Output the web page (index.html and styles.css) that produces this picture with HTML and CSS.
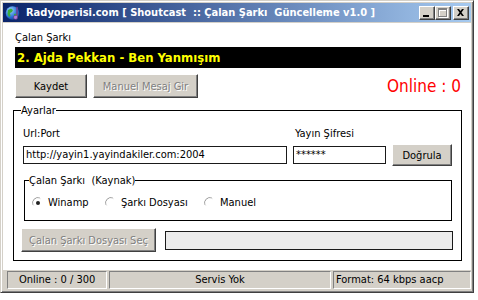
FILE: index.html
```html
<!DOCTYPE html>
<html lang="tr">
<head>
<meta charset="utf-8">
<title>Radyoperisi.com</title>
<link rel="stylesheet" href="styles.css">
</head>
<body>
<div class="window">
  <div class="titlebar">
    <svg class="app-icon" viewBox="0 0 16 16" width="16" height="16">
      <defs>
        <radialGradient id="g" cx="0.35" cy="0.3" r="0.8">
          <stop offset="0" stop-color="#9fd4ff"/>
          <stop offset="0.6" stop-color="#2c74d8"/>
          <stop offset="1" stop-color="#0d3a8c"/>
        </radialGradient>
      </defs>
      <circle cx="7.5" cy="8" r="6.8" fill="url(#g)"/>
      <path d="M3 5 L6 3.5 L8 5 L7 7 L5 8 L5.5 11 L4 12 L2.5 9 Z" fill="#3cae3c"/>
      <path d="M9 9 L12 8.5 L13 11 L10.5 13.5 L9 12 Z" fill="#3cae3c"/>
      <path d="M11.5 2 L12.5 2 L12.5 12 A2 2 0 1 1 11.5 10.6 Z" fill="#b07cd8" stroke="#5a2d82" stroke-width="0.6"/>
    </svg>
    <span class="title">Radyoperisi.com [ Shoutcast&nbsp; :: Çalan Şarkı&nbsp; Güncelleme v1.0 ]</span>
    <div class="caption-btns">
      <span class="cbtn"><svg viewBox="0 0 16 14" width="16" height="14"><rect x="4" y="9" width="6" height="2" fill="#000"/></svg></span>
      <span class="cbtn"><svg viewBox="0 0 16 14" width="16" height="14"><path d="M4 3h9v9h-9z M5 5v6h7v-6z" fill="#fff" fill-rule="evenodd"/><path d="M3 2h9v9h-9z M4 4v6h7v-6z" fill="#808080" fill-rule="evenodd"/></svg></span>
      <span class="cbtn close"><svg viewBox="0 0 16 14" width="16" height="14"><path d="M4 3h2l1.5 2 1.5-2h2l-2.5 3.5 2.5 3.5h-2l-1.5-2-1.5 2h-2l2.5-3.5z" fill="#000"/></svg></span>
    </div>
  </div>

  <div class="client">
    <div class="now-label">Çalan Şarkı</div>
    <div class="now-playing">2. Ajda Pekkan - Ben Yanmışım</div>
    <div class="actions">
      <button class="btn btn-save">Kaydet</button>
      <button class="btn btn-manual" disabled>Manuel Mesaj Gir</button>
      <span class="online">Online : 0</span>
    </div>

    <div class="group settings">
      <span class="group-title">Ayarlar</span>
      <div class="conn-grid">
        <span class="field-label">Url:Port</span>
        <span class="field-label pass-label">Yayın Şifresi</span>
        <span></span>
        <div class="textbox">http://yayin1.yayindakiler.com:2004</div>
        <div class="textbox">******</div>
        <button class="btn btn-verify">Doğrula</button>
      </div>

      <div class="group source">
        <span class="group-title">Çalan Şarkı&nbsp; (Kaynak)</span>
        <div class="radios">
          <span class="radio r-winamp">
            <svg viewBox="0 0 12 12" width="12" height="12"><path d="M1.1 8 A5.2 5.2 0 0 1 8 1.1" fill="none" stroke="#9a9a9a"/><path d="M8 1.1 A5.2 5.2 0 0 1 1.1 8" fill="none" stroke="#e4e4e4"/><circle cx="6" cy="6" r="4.6" fill="#fff"/><circle cx="6" cy="6" r="2" fill="#222"/></svg>
            Winamp</span>
          <span class="radio r-file">
            <svg viewBox="0 0 12 12" width="12" height="12"><path d="M1.1 8 A5.2 5.2 0 0 1 8 1.1" fill="none" stroke="#9a9a9a"/><path d="M8 1.1 A5.2 5.2 0 0 1 1.1 8" fill="none" stroke="#e4e4e4"/><circle cx="6" cy="6" r="4.6" fill="#fff"/></svg>
            Şarkı Dosyası</span>
          <span class="radio r-manual">
            <svg viewBox="0 0 12 12" width="12" height="12"><path d="M1.1 8 A5.2 5.2 0 0 1 8 1.1" fill="none" stroke="#9a9a9a"/><path d="M8 1.1 A5.2 5.2 0 0 1 1.1 8" fill="none" stroke="#e4e4e4"/><circle cx="6" cy="6" r="4.6" fill="#fff"/></svg>
            Manuel</span>
        </div>
      </div>

      <div class="file-row">
        <button class="btn btn-file" disabled>Çalan Şarkı Dosyası Seç</button>
        <div class="filebox"></div>
      </div>
    </div>
  </div>

  <div class="statusbar">
    <div class="panel p-online">Online : 0 / 300</div>
    <div class="panel p-service">Servis Yok</div>
    <div class="panel p-format">Format: 64 kbps aacp</div>
  </div>
</div>
</body>
</html>
```

FILE: styles.css
```css
html, body {
  margin: 0;
  padding: 0;
  background: #fff;
}

body {
  font-family: "DejaVu Sans Condensed", "DejaVu Sans", sans-serif;
  font-size: 11px;
  line-height: 13px;
  color: #000;
}

.window {
  width: 474px;
  height: 293px;
  box-sizing: border-box;
  border: 1px solid;
  border-color: #d4d0c8 #404040 #404040 #d4d0c8;
  box-shadow: inset 1px 1px #fff, inset -1px -1px #808080;
  padding: 2px;
  background: #d4d0c8;
  display: flex;
  flex-direction: column;
}

.titlebar {
  height: 19px;
  flex: none;
  display: flex;
  align-items: center;
  padding: 0 2px;
  background: linear-gradient(to right, #0a246a, #a6caf0);
  color: #fff;
  font-weight: bold;
  white-space: nowrap;
}

.app-icon {
  flex: none;
  margin-right: 5px;
}

.caption-btns {
  margin-left: auto;
  display: flex;
}

.cbtn {
  width: 16px;
  height: 14px;
  box-sizing: border-box;
  background: #d4d0c8;
  border: 1px solid;
  border-color: #fff #404040 #404040 #fff;
  box-shadow: inset -1px -1px #808080;
  position: relative;
}

.cbtn svg {
  position: absolute;
  left: -1px;
  top: -1px;
}

.cbtn.close {
  margin-left: 2px;
}

.client {
  flex: 1;
  margin-top: 1px;
  background: #fff;
  padding: 8px 9px 0 10px;
  display: flex;
  flex-direction: column;
}

.now-label {
  margin-left: 2px;
}

.now-playing {
  margin: 3px 1px 0 2px;
  height: 21px;
  background: #000;
  color: #ffff00;
  font-weight: bold;
  font-size: 13px;
  line-height: 21px;
  padding-left: 2px;
}

.actions {
  margin: 6px 1px 0 2px;
  display: flex;
  align-items: center;
  gap: 6px;
}

.btn {
  font: inherit;
  color: #000;
  background: #d4d0c8;
  border: 1px solid;
  border-color: #fff #404040 #404040 #fff;
  box-shadow: inset -1px -1px #808080;
  padding: 0;
  margin: 0;
  box-sizing: border-box;
}

.btn:disabled {
  color: #808080;
  text-shadow: 1px 1px #fff;
}

.btn-save {
  width: 72px;
  height: 24px;
}

.btn-manual {
  width: 105px;
  height: 24px;
}

.online {
  margin-left: auto;
  color: #ff0000;
  font-size: 17px;
  line-height: 20px;
}

.group {
  position: relative;
  border: 1px solid #000;
}

.group-title {
  position: absolute;
  top: -7px;
  line-height: 13px;
  background: #fff;
  white-space: nowrap;
}

.settings {
  margin-top: 12px;
  padding: 16px 8px 8px 9px;
}

.settings > .group-title {
  left: 7px;
}

.conn-grid {
  display: grid;
  grid-template-columns: 264px 93px 60px;
  grid-template-rows: 13px 22px;
  column-gap: 6px;
  row-gap: 4px;
  align-items: center;
}

.pass-label {
  padding-left: 2px;
}

.textbox {
  height: 18px;
  box-sizing: border-box;
  border: 1px solid #1a1a1a;
  padding: 0 2px;
  line-height: 16px;
  white-space: nowrap;
  overflow: hidden;
}

.btn-verify {
  height: 22px;
  width: 60px;
}

.source {
  margin: 14px 1px 0 1px;
  padding: 15px 5px 11px 7px;
}

.source > .group-title {
  left: 4px;
}

.radios {
  display: flex;
  height: 13px;
}

.radio {
  display: flex;
  align-items: center;
  gap: 4px;
}

.r-winamp {
  width: 73px;
}

.r-file {
  width: 99px;
}

.file-row {
  margin: 7px 0 0 -2px;
  display: flex;
  align-items: center;
  gap: 9px;
}

.btn-file {
  width: 135px;
  height: 24px;
}

.filebox {
  flex: 1;
  height: 19px;
  box-sizing: border-box;
  border: 1px solid #1a1a1a;
  background: #ebebeb;
}

.statusbar {
  height: 20px;
  flex: none;
  display: flex;
  gap: 2px;
  padding: 1px 0 1px 4px;
  box-sizing: border-box;
  background: #d4d0c8;
}

.panel {
  height: 18px;
  box-sizing: border-box;
  border: 1px solid;
  border-color: #808080 #fff #fff #808080;
  line-height: 16px;
  white-space: nowrap;
}

.p-online {
  width: 100px;
  padding-left: 11px;
}

.p-service {
  width: 222px;
  text-align: center;
}

.p-format {
  flex: 1;
  padding-left: 2px;
}
```
